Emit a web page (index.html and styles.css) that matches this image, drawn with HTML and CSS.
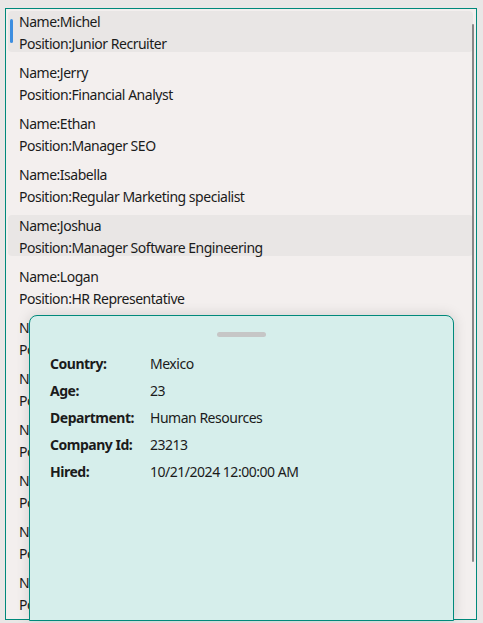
FILE: index.html
```html
<!DOCTYPE html>
<html>
<head>
<meta charset="utf-8">
<link rel="stylesheet" href="styles.css">
</head>
<body>
<div class="list">
  <div class="items">
    <div class="item selected"><span class="indicator"></span><div>Name:Michel</div><div>Position:Junior Recruiter</div></div>
    <div class="item"><div>Name:Jerry</div><div>Position:Financial Analyst</div></div>
    <div class="item"><div>Name:Ethan</div><div>Position:Manager SEO</div></div>
    <div class="item"><div>Name:Isabella</div><div>Position:Regular Marketing specialist</div></div>
    <div class="item hover"><div>Name:Joshua</div><div>Position:Manager Software Engineering</div></div>
    <div class="item"><div>Name:Logan</div><div>Position:HR Representative</div></div>
    <div class="item"><div>Name:Sophia</div><div>Position:Product Designer</div></div>
    <div class="item"><div>Name:Liam</div><div>Position:Accountant</div></div>
    <div class="item"><div>Name:Olivia</div><div>Position:Project Manager</div></div>
    <div class="item"><div>Name:Noah</div><div>Position:Sales Representative</div></div>
    <div class="item"><div>Name:Emma</div><div>Position:QA Engineer</div></div>
    <div class="item"><div>Name:Mason</div><div>Position:Data Analyst</div></div>
  </div>
  <div class="scrollbar"></div>
</div>
<div class="sheet">
  <div class="handle"></div>
  <div class="details">
    <div class="label">Country:</div><div class="value">Mexico</div>
    <div class="label">Age:</div><div class="value">23</div>
    <div class="label">Department:</div><div class="value">Human Resources</div>
    <div class="label">Company Id:</div><div class="value">23213</div>
    <div class="label">Hired:</div><div class="value">10/21/2024 12:00:00 AM</div>
  </div>
</div>
</body>
</html>
```
FILE: styles.css
```css
html, body {
  margin: 0;
  padding: 0;
  background: #e9e7e6;
  height: 623px;
  overflow: hidden;
}
body {
  font-family: "Noto Sans", "Segoe UI", sans-serif;
  font-size: 14px;
  letter-spacing: -0.48px;
  color: #1b1b1b;
  position: relative;
}
.list {
  margin: 8px 6px 0 5px;
  height: 610px;
  border: 1px solid #00897b;
  background: #f3efee;
  position: relative;
  overflow: hidden;
}
.items {
  display: flex;
  flex-direction: column;
  gap: 10px;
  padding: 2px 3px 0 2px;
}
.item {
  height: 41px;
  padding-left: 11px;
  line-height: 22px;
  border-radius: 4px;
  position: relative;
  white-space: nowrap;
}
.item.selected, .item.hover {
  background: #e9e6e5;
}
.indicator {
  position: absolute;
  left: 2px;
  top: 8px;
  width: 3px;
  height: 24px;
  border-radius: 2px;
  background: #3d8ee0;
}
.scrollbar {
  position: absolute;
  right: 2px;
  top: 15px;
  width: 2px;
  height: 538px;
  border-radius: 1px;
  background: #878787;
}
.sheet {
  position: absolute;
  left: 29px;
  top: 315px;
  width: 423px;
  height: 304px;
  border: 1px solid #00897b;
  border-radius: 8px 8px 0 0;
  background: #d6eeeb;
  box-shadow: 0 0 14px rgba(0, 0, 0, 0.14);
  display: flex;
  flex-direction: column;
  align-items: stretch;
}
.handle {
  align-self: center;
  margin-top: 16px;
  width: 49px;
  height: 5px;
  border-radius: 3px;
  background: #c6c6c6;
}
.details {
  margin-top: 13px;
  padding-left: 20px;
  display: grid;
  grid-template-columns: 100px auto;
  grid-auto-rows: 27px;
  line-height: 27px;
}
.label {
  font-weight: 700;
}
```
